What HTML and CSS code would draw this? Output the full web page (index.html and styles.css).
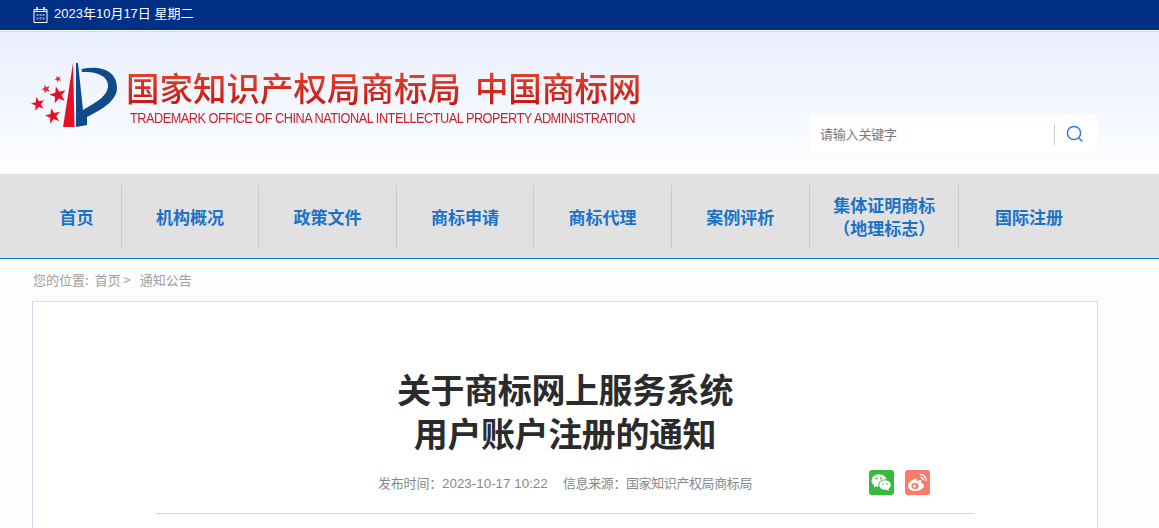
FILE: index.html
```html
<!DOCTYPE html>
<html lang="zh-CN">
<head>
<meta charset="utf-8">
<title>关于商标网上服务系统用户账户注册的通知</title>
<link rel="stylesheet" href="styles.css">
</head>
<body>
<div class="topbar">
  <svg class="cal" width="15" height="16" viewBox="0 0 15 16"><path d="M1 2.500h13v13H1z" fill="none" stroke="#fff"/><path d="M1 4.500h13" stroke="#fff"/><path d="M4 0v3.500M11 0v3.500" stroke="#fff" stroke-width="1.500"/><path d="M3.500 7h2v2h-2zM6.500 7h2v2h-2zM9.500 7h2v2h-2zM3.500 10.500h2v2h-2zM6.500 10.500h2v2h-2zM9.500 10.500h2v2h-2z" fill="#7f9ac6"/></svg>
  <span class="date">2023年10月17日 星期二</span>
</div>
<header class="header">
  <div class="brand">
    <svg class="emblem" width="86" height="66" viewBox="0 0 86 66">
      <defs><path id="s" d="M0-10L2.350-3.240 9.510-3.090 3.800 1.240 5.880 8.090 0 4-5.880 8.090-3.800 1.240-9.510-3.090-2.350-3.240Z"/></defs>
      <path d="M42 0L43.500 64 32 64Z" fill="#e60f23"/>
      <path d="M45 0L47 0 52 47C66 39 76 33 77 24 78 14 67 8 51 9L50.500 6C70 2 86 8 86 25 86 38 70 47 56 54L56 62 45 64Z" fill="#0f4a8c"/>
      <use href="#s" fill="#e60f23" transform="translate(27 32) rotate(-14) scale(.88)"/>
      <use href="#s" fill="#e60f23" transform="translate(7 41) rotate(-14) scale(.72)"/>
      <use href="#s" fill="#e60f23" transform="translate(22 53) rotate(-14) scale(.8)"/>
      <use href="#s" fill="#e3262f" transform="translate(15 26) rotate(-20) scale(.48)"/>
      <use href="#s" fill="#e3262f" transform="translate(27 16) rotate(-25) scale(.36)"/>
    </svg>
    <div class="brand-text">
      <div class="brand-cn">国家知识产权局商标局<span class="brand-cn-second">中国商标网</span></div>
      <div class="brand-en">TRADEMARK OFFICE OF CHINA NATIONAL INTELLECTUAL PROPERTY ADMINISTRATION</div>
    </div>
  </div>
  <div class="search">
    <span class="search-text">请输入关键字</span>
    <span class="search-sep"></span>
    <svg class="search-icon" width="18" height="18" viewBox="0 0 18 18"><circle cx="8" cy="8" r="6.600" fill="none" stroke="#2f7de1" stroke-width="1.500"/><path d="M13 13l3.500 3.500" stroke="#2f7de1" stroke-width="1.500"/></svg>
  </div>
</header>
<nav class="nav">
  <a class="nav-item nav-first">首页</a>
  <a class="nav-item">机构概况</a>
  <a class="nav-item">政策文件</a>
  <a class="nav-item">商标申请</a>
  <a class="nav-item">商标代理</a>
  <a class="nav-item nav-sixth">案例评析</a>
  <a class="nav-item nav-wide">集体证明商标<br>（地理标志）</a>
  <a class="nav-item nav-last">国际注册</a>
</nav>
<div class="crumbs"><span class="crumb-where">您的位置:</span><span class="crumb-home">首页 &gt;</span><span>通知公告</span></div>
<main class="card">
  <h1 class="title">关于商标网上服务系统<br>用户账户注册的通知</h1>
  <div class="meta">
    <span class="meta-time">发布时间：<span class="meta-num">2023-10-17 10:22</span></span>
    <span class="meta-src">信息来源：国家知识产权局商标局</span>
    <span class="share share-wx">
      <svg width="21" height="19" viewBox="0 0 21 19"><ellipse cx="8" cy="7.500" rx="7.500" ry="6.300" fill="#fff"/><path d="M3.500 11.500l-.8 3 3.300-1.800z" fill="#fff"/><ellipse cx="14" cy="12" rx="6.300" ry="5.200" fill="#fff" stroke="#37bb3f"/><path d="M17 15.500l1.200 2.500-3.300-1.500z" fill="#fff"/><circle cx="5.500" cy="5.500" r="1" fill="#37bb3f"/><circle cx="10" cy="5.500" r="1" fill="#37bb3f"/><circle cx="12" cy="11" r=".8" fill="#37bb3f"/><circle cx="16" cy="11" r=".8" fill="#37bb3f"/></svg>
    </span>
    <span class="share share-wb">
      <svg width="21" height="19" viewBox="0 0 21 19"><path d="M9 5.500c-4.500 1-8 4.300-8 7.500 0 3 3.500 5 7.500 5 4.500 0 8.500-2.500 8.500-5.200 0-1.800-2-2.400-2.800-2.700.6-1.500.3-2.500-.7-2.800-1.200-.3-3 .5-4 1 .5-1.800.2-3.400-.5-2.800z" fill="#fff"/><ellipse cx="8" cy="13" rx="3.700" ry="3" fill="#fb7a6b"/><circle cx="7.500" cy="13.200" r="1.400" fill="#fff"/><path d="M13 1.500c3.500-.5 6.500 2.500 6 6.500M13.500 4.500c1.800-.3 3 1 2.800 2.800" fill="none" stroke="#fff" stroke-width="1.500"/></svg>
    </span>
  </div>
  <hr class="rule">
</main>
</body>
</html>
```
FILE: styles.css
```css
* { box-sizing: border-box; }
html, body { margin: 0; padding: 0; height: 528px; overflow: hidden; }
body {
  background: #fdfdfd;
  font-family: "Noto Sans CJK SC", "Liberation Sans", sans-serif;
  display: flex;
  flex-direction: column;
}
.topbar {
  height: 31px;
  flex: none;
  background: #003085;
  border-bottom: 1px solid #fff;
  display: flex;
  align-items: center;
  padding-left: 33px;
  padding-bottom: 1px;
  color: #fff;
}
.cal { margin-right: 6px; }
.date { font-family: "Liberation Sans", "Noto Sans CJK SC", sans-serif; font-size: 13px; line-height: 16px; margin-top: -1px; }
.header {
  height: 143px;
  flex: none;
  background: linear-gradient(#e9effd, #fdfeff);
  border-top: 1px solid #cfd8ea;
  display: flex;
  justify-content: space-between;
  padding: 31px 62px 0 31px;
}
.brand { display: flex; align-items: flex-start; }
.emblem { margin-right: 9px; flex: none; }
.brand-text { margin-top: 2px; }
.brand-cn {
  font-size: 33.500px;
  line-height: 44px;
  font-weight: 500;
  white-space: nowrap;
  background: linear-gradient(#ea4c34, #c1120e);
  -webkit-background-clip: text;
  background-clip: text;
  color: transparent;
}
.brand-cn-second { margin-left: 14px; letter-spacing: -0.300px; }
.brand-en {
  font-family: "Liberation Sans", sans-serif;
  font-size: 14.500px;
  line-height: 16px;
  letter-spacing: -0.580px;
  color: #c8232b;
  margin-top: 1px;
  margin-left: 4px;
  white-space: nowrap;
  transform: scaleX(.88);
  transform-origin: left center;
}
.search {
  width: 287px;
  height: 38px;
  background: #fff;
  margin-top: 52px;
  display: flex;
  align-items: center;
  padding-left: 10px;
}
.search-text { font-size: 13px; letter-spacing: -.2px; color: #777; width: 234px; padding-bottom: 2px; }
.search-sep { width: 1px; height: 21px; background: #ccc; }
.search-icon { margin-left: 11px; }
.nav {
  height: 85px;
  flex: none;
  background: #e1e1e1;
  border-bottom: 1px solid #0d73cc;
  display: flex;
  align-items: center;
  padding-left: 32px;
}
.nav-item {
  width: 137.500px;
  height: 63px;
  display: flex;
  align-items: center;
  justify-content: center;
  text-align: center;
  color: #1a73c8;
  font-size: 17px;
  font-weight: 700;
  line-height: 23px;
  border-right: 1px solid #c6c9d0;
}
.nav-first { width: 89.800px; }
.nav-sixth { width: 138px; }
.nav-wide { width: 149.700px; }
.nav-last { width: 139px; border-right: 0; }
.crumbs {
  height: 42px;
  flex: none;
  display: flex;
  gap: 8px;
  padding: 11px 0 0 33px;
  font-size: 13px;
  line-height: 20px;
  color: #a0a0a0;
}
.crumb-where { margin-right: -2px; }
.crumb-home { margin-right: 1px; }
.card {
  flex: 1;
  width: 1066px;
  margin-left: 32px;
  background: #fff;
  border: 1px solid #d4dcec;
  border-bottom: 0;
  padding: 65px 123px 0;
}
.title {
  margin: 0;
  text-align: center;
  font-size: 34px;
  line-height: 44px;
  letter-spacing: -0.400px;
  font-weight: 700;
  color: #2b2b2b;
}
.meta {
  display: flex;
  align-items: center;
  height: 26px;
  margin-top: 14px;
  padding-left: 222px;
  font-size: 13px;
  color: #888;
  white-space: nowrap;
}
.meta-time { width: 185px; letter-spacing: -0.200px; }
.meta-num { font-family: "Liberation Sans", sans-serif; font-size: 13.400px; letter-spacing: 0; }
.meta-src { width: 306px; letter-spacing: -0.400px; }
.share {
  width: 25px;
  height: 25px;
  border-radius: 3px;
  display: flex;
  align-items: center;
  justify-content: center;
  flex: none;
}
.share-wx { background: #37bb3f; margin-right: 11px; }
.share-wb { background: #fb7a6b; }
.rule {
  margin: 18px 0 0;
  border: 0;
  height: 1px;
  background: #d5d5d5;
}
```
